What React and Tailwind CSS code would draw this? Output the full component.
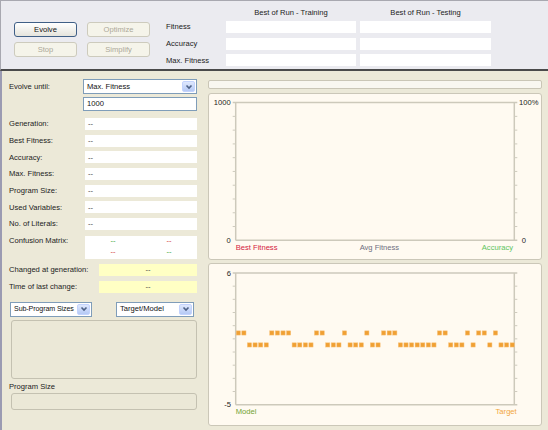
import React from 'react';

// Target/Model samples (1 = upper row, 0 = lower row)
const runs = [
  [1, 2], [0, 4], [1, 4], [0, 4], [1, 2], [0, 3], [1, 1], [0, 3], [1, 1], [0, 2],
  [1, 3], [0, 7], [1, 2], [0, 3], [1, 1], [0, 1], [1, 2], [0, 1], [1, 1], [0, 3],
];
const samples = runs.flatMap(([v, n]) => Array(n).fill(v));

const Chevron = () => (
  <svg width="8" height="6" viewBox="0 0 8 6">
    <path d="M1.5 1.5 L4 4 L6.5 1.5" fill="none" stroke="#4d6185" strokeWidth="1.6" />
  </svg>
);

const XpSelect = ({ value, className, textClass = '' }) => (
  <div className={`flex items-stretch bg-white border border-[#7f9db9] ${className}`}>
    <span className={`flex-1 pl-[3px] flex items-center text-[#111] whitespace-nowrap overflow-hidden ${textClass}`}>{value}</span>
    <span className="w-[13px] shrink-0 my-[1px] mr-[1px] rounded-[2px] border border-[#c3d3fd] bg-linear-to-b from-[#dfe8fd] to-[#b5c9f5] flex items-center justify-center">
      <Chevron />
    </span>
  </div>
);

const XpButton = ({ children, disabled }) => (
  <button
    className={
      disabled
        ? 'h-[15px] rounded-[3px] border border-[#cdcbbd] bg-[#f5f4ea] text-[#aca899]'
        : 'h-[15px] rounded-[3px] border border-[#3f5f86] bg-linear-to-b from-white to-[#e5e4dc] text-[#111]'
    }
  >
    {children}
  </button>
);

const StatRow = ({ label }) => (
  <div className="flex h-[12px] items-center">
    <span className="w-[76px] text-[#222]">{label}</span>
    <div className="w-[112px] h-full bg-white pl-[3px] flex items-center text-[#444]">--</div>
  </div>
);

const Ticks = ({ left, right, top, bottom, n }) => {
  const out = [];
  for (let k = 1; k < n; k++) {
    const y = top + ((bottom - top) * k) / n;
    out.push(<line key={'l' + k} x1={left - 3} x2={left} y1={y} y2={y} />);
    out.push(<line key={'r' + k} x1={right} x2={right + 3} y1={y} y2={y} />);
  }
  return <g stroke="#cfcbbe" strokeWidth="1">{out}</g>;
};

const Frame = ({ left, right, top, bottom }) => (
  <g stroke="#cdc9bb" strokeWidth="1.5" fill="none">
    <line x1={left} x2={left} y1={top} y2={bottom} />
    <line x1={left - 3} x2={right + 3} y1={top} y2={top} />
    <line x1={right} x2={right} y1={top} y2={bottom} />
    <line x1={left} x2={right + 3} y1={bottom} y2={bottom} />
  </g>
);

const FitnessChart = () => {
  const L = 26.7, R = 305.3, T = 8.6, B = 146.3;
  return (
    <svg width="332" height="166" viewBox="0 0 332 166" className="block" fontFamily="Liberation Sans, Arial, sans-serif" fontSize="7.6">
      <Frame left={L} right={R} top={T} bottom={B} />
      <Ticks left={L} right={R} top={T} bottom={B} n={10} />
      <text x="21.7" y="11.3" textAnchor="end" fill="#222">1000</text>
      <text x="21.7" y="149" textAnchor="end" fill="#222">0</text>
      <text x="310" y="11.3" fill="#222">100%</text>
      <text x="312.7" y="149" fill="#222">0</text>
      <text x={L} y="155.7" fill="#d4213d">Best Fitness</text>
      <text x="170.4" y="155.7" textAnchor="middle" fill="#6e6e80">Avg Fitness</text>
      <text x="304" y="155.7" textAnchor="end" fill="#5cc45c">Accuracy</text>
    </svg>
  );
};

const TargetChart = () => {
  const L = 26.7, R = 305.3, T = 9, B = 140.7;
  const unit = (B - T) / 11;
  return (
    <svg width="332" height="161" viewBox="0 0 332 161" className="block" fontFamily="Liberation Sans, Arial, sans-serif" fontSize="7.6">
      <Frame left={L} right={R} top={T} bottom={B} />
      <Ticks left={L} right={R} top={T} bottom={B} n={10} />
      {samples.map((v, i) => (
        <rect
          key={i}
          x={27.2 + i * 5.59}
          y={T + (6 - v) * unit - 2}
          width="4.2"
          height="4.2"
          fill="#f0a034"
          stroke="#f7c27a"
          strokeWidth="0.5"
        />
      ))}
      <text x="22" y="11.7" textAnchor="end" fill="#222">6</text>
      <text x="22" y="143.4" textAnchor="end" fill="#222">-5</text>
      <text x={L} y="150" fill="#72a232">Model</text>
      <text x="307.7" y="150" textAnchor="end" fill="#f2a640">Target</text>
    </svg>
  );
};

export default function App() {
  return (
    <div className="w-[548px] h-[430px] overflow-hidden font-['Liberation_Sans',Arial,sans-serif] text-[7.6px] leading-none bg-[#ece9d8]">
      {/* top: run controls and best-of-run table */}
      <div className="h-[71px] flex bg-[#ebebf0] border-t border-l border-[#a8a8b0] border-b-2 border-b-[#4a4a4a]">
        <div className="ml-[13px] mt-[21px] grid grid-cols-[63px_63px] gap-x-[10px] gap-y-[5px] content-start">
          <XpButton>Evolve</XpButton>
          <XpButton disabled>Optimize</XpButton>
          <XpButton disabled>Stop</XpButton>
          <XpButton disabled>Simplify</XpButton>
        </div>
        <div className="ml-[16px] mt-[6px] flex flex-col">
          <div className="grid grid-cols-[56px_130px_131px] gap-x-[4px] h-[12px] items-center text-[#222]">
            <span />
            <span className="text-center">Best of Run - Training</span>
            <span className="text-center">Best of Run - Testing</span>
          </div>
          <div className="mt-[2px] flex flex-col gap-y-[4.7px]">
            {['Fitness', 'Accuracy', 'Max. Fitness'].map((l) => (
              <div key={l} className="grid grid-cols-[56px_130px_131px] gap-x-[4px] h-[12px] items-center text-[#222]">
                <span>{l}</span>
                <div className="h-full bg-white" />
                <div className="h-full bg-white" />
              </div>
            ))}
          </div>
        </div>
      </div>

      {/* lower area */}
      <div className="h-[359px] flex border-l-2 border-[#9b9bb2]">
        {/* left: statistics */}
        <div className="w-[203px] pl-[7px] pt-[8px] flex flex-col">
          <div className="flex h-[15px] items-center">
            <span className="w-[74px] text-[#222]">Evolve until:</span>
            <XpSelect value="Max. Fitness" className="w-[114px] h-[15px]" />
          </div>
          <div className="mt-[3px] ml-[74px] w-[114px] h-[14px] border border-[#7f9db9] bg-white pl-[3px] flex items-center text-[#111]">
            1000
          </div>
          <div className="mt-[7px] flex flex-col gap-y-[4.7px]">
            {['Generation:', 'Best Fitness:', 'Accuracy:', 'Max. Fitness:', 'Program Size:', 'Used Variables:', 'No. of Literals:'].map((l) => (
              <StatRow key={l} label={l} />
            ))}
          </div>
          <div className="mt-[5.5px] flex">
            <span className="w-[76px] h-[11px] flex items-center text-[#222]">Confusion Matrix:</span>
            <div className="w-[112px] h-[23.3px] bg-white flex flex-col">
              <div className="h-[11px] grid grid-cols-2 items-center text-center">
                <span className="text-[#3aa63a]">--</span>
                <span className="text-[#d33a3a]">--</span>
              </div>
              <div className="h-[11px] grid grid-cols-2 items-center text-center">
                <span className="text-[#d33a3a]">--</span>
                <span className="text-[#3aa63a]">--</span>
              </div>
            </div>
          </div>
          <div className="mt-[5px] flex h-[12px] items-center">
            <span className="w-[90px] text-[#222]">Changed at generation:</span>
            <div className="w-[98px] h-full bg-[#ffffc4] flex items-center justify-center text-[#444]">--</div>
          </div>
          <div className="mt-[5px] flex h-[12px] items-center">
            <span className="w-[90px] text-[#222]">Time of last change:</span>
            <div className="w-[98px] h-full bg-[#ffffc4] flex items-center justify-center text-[#444]">--</div>
          </div>
          <div className="mt-[8.7px] ml-[1px] flex gap-x-[24px]">
            <XpSelect value="Sub-Program Sizes" className="w-[82px] h-[15px]" textClass="pl-[2px] text-[7.1px] tracking-[-0.1px]" />
            <XpSelect value="Target/Model" className="w-[78px] h-[15px]" />
          </div>
          <div className="mt-[3.3px] ml-[1.7px] w-[186.6px] h-[59px] rounded-[3px] border border-[#c4c1b1] bg-[#ebe8d7]" />
          <div className="mt-[2px] h-[11px] flex items-center text-[#222]">Program Size</div>
          <div className="mt-[1.3px] ml-[1.7px] w-[186.6px] h-[16.7px] rounded-[3px] border border-[#c4c1b1] bg-[#ebe8d7]" />
        </div>

        {/* right: progress and charts */}
        <div className="pl-[3px] pt-[9px] flex flex-col">
          <div className="w-[334px] h-[9px] rounded-[2px] border border-[#cac6b6] bg-[#f9f7f0]" />
          <div className="mt-[3.7px] w-[334px] h-[167.3px] rounded-[3px] border border-[#cbc7b8] bg-[#fffaf1]">
            <FitnessChart />
          </div>
          <div className="mt-[3.3px] w-[334px] h-[162.4px] rounded-[3px] border border-[#cbc7b8] bg-[#fffaf1]">
            <TargetChart />
          </div>
        </div>
      </div>
    </div>
  );
}
